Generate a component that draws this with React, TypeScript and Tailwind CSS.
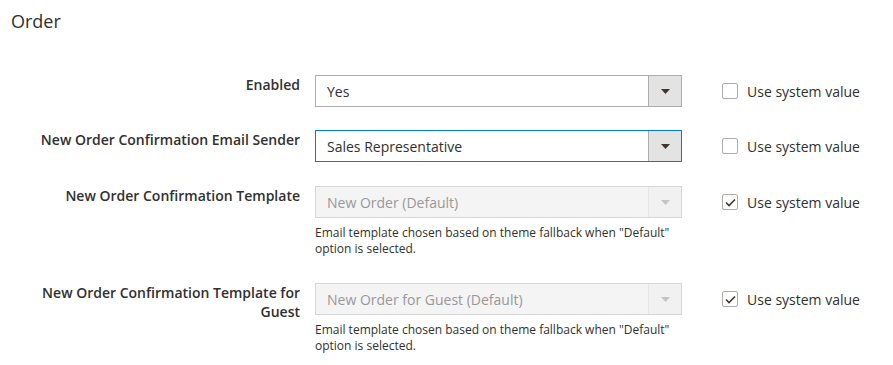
type Row = {
  label: string;
  value: string;
  focused?: boolean;
  disabled?: boolean;
  checked: boolean;
  note?: string;
  space: string;
};

const rows: Row[] = [
  { label: "Enabled", value: "Yes", checked: false, space: "mb-[23px]" },
  {
    label: "New Order Confirmation Email Sender",
    value: "Sales Representative",
    focused: true,
    checked: false,
    space: "mb-[24px]",
  },
  {
    label: "New Order Confirmation Template",
    value: "New Order (Default)",
    disabled: true,
    checked: true,
    note: 'Email template chosen based on theme fallback when "Default" option is selected.',
    space: "mb-[26px]",
  },
  {
    label: "New Order Confirmation Template for Guest",
    value: "New Order for Guest (Default)",
    disabled: true,
    checked: true,
    note: 'Email template chosen based on theme fallback when "Default" option is selected.',
    space: "",
  },
];

function Select({ value, focused, disabled }: { value: string; focused?: boolean; disabled?: boolean }) {
  const border = disabled ? "border-[#d6d6d6]" : focused ? "border-[#007bdb]" : "border-[#adadad]";
  return (
    <div className={`flex h-[32px] w-[367px] border ${border} ${disabled ? "bg-[#f4f4f4]" : "bg-white"}`}>
      <div
        className={`flex flex-1 items-center pl-[11px] text-[14px] ${disabled ? "text-[#989898]" : "text-[#303030]"}`}
      >
        {value}
      </div>
      <div
        className={`flex w-[33px] items-center justify-center border-l ${
          disabled ? "border-[#e6e6e6] bg-[#f1f1f1]" : "border-[#adadad] bg-[#e3e3e3]"
        }`}
      >
        <svg width="9" height="5" viewBox="0 0 9 5">
          <path d="M0 0h9L4.5 5z" fill={disabled ? "#c4c4c4" : "#41362f"} />
        </svg>
      </div>
    </div>
  );
}

function Checkbox({ checked }: { checked: boolean }) {
  return (
    <div className="flex h-[16px] w-[16px] items-center justify-center rounded-[2px] border border-[#adadad] bg-white">
      {checked && (
        <svg width="11" height="9" viewBox="0 0 11 9">
          <path d="M1 4.5l3 3L10 1.5" fill="none" stroke="#41362f" strokeWidth="1.6" />
        </svg>
      )}
    </div>
  );
}

export default function App() {
  return (
    <div
      className="h-[365px] w-[893px] overflow-hidden bg-white text-[#303030]"
      style={{ fontFamily: '"Open Sans", "Noto Sans", sans-serif' }}
    >
      <h2 className="pl-[11px] pt-[9px] text-[18px] leading-[24px] text-[#303030]">Order</h2>

      <div className="mt-[42px] flex flex-col">
        {rows.map((row) => (
          <div key={row.label} className={`flex items-start ${row.space}`}>
            <div className="w-[300px] pl-[30px] text-right text-[14px] font-semibold leading-[19px]">
              {row.label}
            </div>
            <div className="ml-[15px] w-[367px]">
              <Select value={row.value} focused={row.focused} disabled={row.disabled} />
              {row.note && (
                <div className="mt-[7px] text-[12px] leading-[16px] text-[#303030]">{row.note}</div>
              )}
            </div>
            <div className="ml-[40px] flex h-[32px] items-center gap-[9px]">
              <Checkbox checked={row.checked} />
              <span className="text-[14px]">Use system value</span>
            </div>
          </div>
        ))}
      </div>
    </div>
  );
}
